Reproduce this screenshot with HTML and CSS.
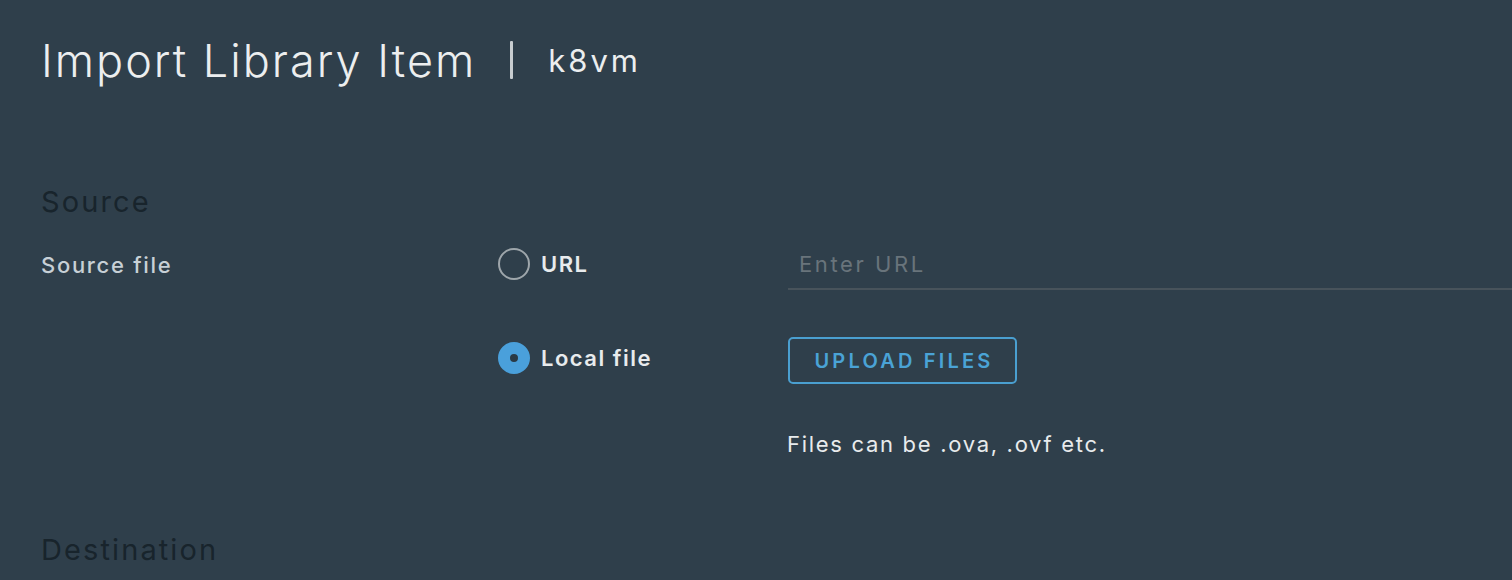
FILE: index.html
```html
<!DOCTYPE html>
<html lang="en">
<head>
<meta charset="utf-8">
<title>Import Library Item</title>
<link rel="stylesheet" href="styles.css">
</head>
<body>
<div class="page">
  <header class="header">
    <h1 class="title">Import Library Item</h1>
    <span class="divider"></span>
    <span class="subtitle">k8vm</span>
  </header>

  <section class="section">
    <h2 class="section-title">Source</h2>
    <div class="form-row">
      <div class="label">Source file</div>
      <div class="options">
        <label class="radio-row">
          <span class="radio"></span>
          <span class="radio-label">URL</span>
        </label>
        <label class="radio-row radio-row-second">
          <span class="radio radio-checked"></span>
          <span class="radio-label">Local file</span>
        </label>
      </div>
      <div class="controls">
        <div class="input-wrap">
          <span class="placeholder">Enter URL</span>
        </div>
        <button class="btn-outline" type="button">UPLOAD FILES</button>
        <p class="helper">Files can be .ova, .ovf etc.</p>
      </div>
    </div>
  </section>

  <section class="section section-dest">
    <h2 class="section-title">Destination</h2>
  </section>
</div>
</body>
</html>
```

FILE: styles.css
```css
html, body {
  margin: 0;
  padding: 0;
  background: #2f3f4b;
  height: 100%;
  overflow: hidden;
}

body {
  font-family: "Inter", "Open Sans", sans-serif;
  color: #e6e9eb;
}

.page {
  padding: 0 0 0 41px;
}

.header {
  display: flex;
  align-items: center;
  height: 120px;
}

.title {
  margin: 0;
  font-weight: 300;
  font-size: 45px;
  color: #eceeef;
  line-height: 1;
  letter-spacing: 2px;
}

.divider {
  display: block;
  width: 3px;
  height: 38px;
  background: #c8cdd0;
  margin: 0 35px 0 34px;
  border-radius: 1px;
}

.subtitle {
  font-size: 31px;
  font-weight: 400;
  color: #eceeef;
  line-height: 1;
  letter-spacing: 3px;
}

.section {
  padding-top: 66px;
}

.section-title {
  margin: 0;
  font-size: 29px;
  font-weight: 400;
  color: #18242c;
  line-height: 32px;
  height: 32px;
  letter-spacing: 2.1px;
}

.form-row {
  display: grid;
  grid-template-columns: 457px 290px 1fr;
  margin-top: 30px;
}

.label {
  font-size: 22px;
  color: #c7d0d6;
  line-height: 32px;
  padding-top: 1px;
  font-weight: 500;
  letter-spacing: 1.7px;
}

.options {
  display: flex;
  flex-direction: column;
}

.radio-row {
  display: flex;
  align-items: center;
  gap: 11px;
  height: 32px;
}

.radio-row-second {
  margin-top: 62px;
}

.radio {
  box-sizing: border-box;
  width: 32px;
  height: 32px;
  border-radius: 50%;
  border: 2px solid #9ea6ab;
  display: block;
  flex: none;
}

.radio-checked {
  border: 12px solid #4aa0db;
  background: #2a3a45;
}

.radio-label {
  font-size: 22px;
  font-weight: 600;
  color: #e8ebed;
  letter-spacing: 1.5px;
}

.radio-label-wide {
  letter-spacing: 2.5px;
}

.controls {
  display: flex;
  flex-direction: column;
  align-items: flex-start;
}

.input-wrap {
  align-self: stretch;
  box-sizing: border-box;
  height: 42px;
  padding: 0 0 0 11px;
  border-bottom: 2px solid #48535b;
  display: flex;
  align-items: flex-start;
}

.placeholder {
  font-size: 22px;
  color: #69747b;
  line-height: 32px;
  letter-spacing: 2.6px;
}

.btn-outline {
  margin-top: 47px;
  box-sizing: border-box;
  width: 229px;
  height: 47px;
  border: 2px solid #4a9fd0;
  border-radius: 5px;
  background: transparent;
  color: #4aa3d6;
  font-family: "Inter", "Open Sans", sans-serif;
  font-weight: 600;
  font-size: 20px;
  letter-spacing: 3.2px;
  padding: 0 0 0 3px;
}

.helper {
  margin: 46px 0 0 -1px;
  font-size: 22px;
  color: #e8ebed;
  line-height: 28px;
  letter-spacing: 1.7px;
}

.section-dest {
  padding-top: 76px;
}
```
